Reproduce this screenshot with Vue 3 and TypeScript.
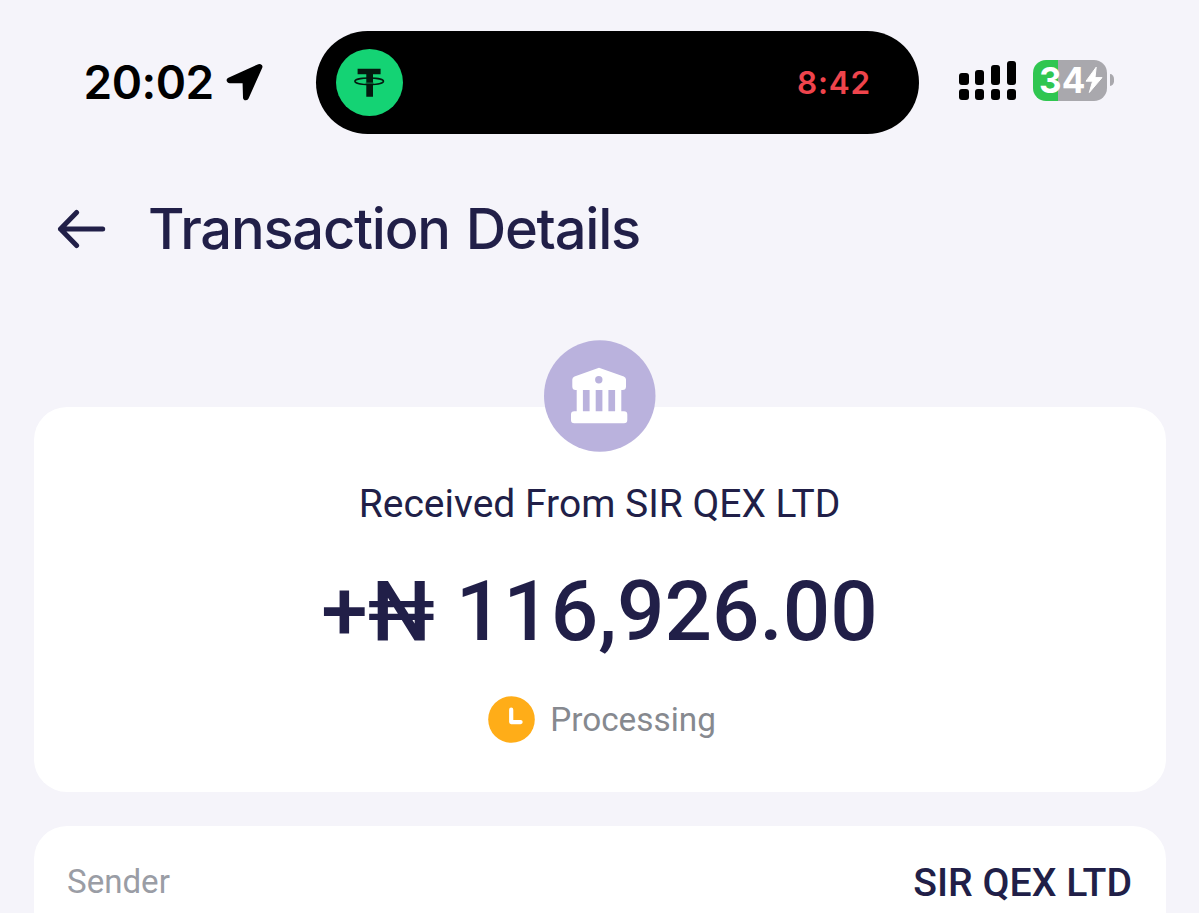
<script setup lang="ts">
interface Detail {
  label: string
  value: string
}

const signalBars: number[] = [11.7, 15, 19.7, 24]
const details: Detail[] = [{ label: 'Sender', value: 'SIR QEX LTD' }]
</script>

<template>
  <main class="screen">
    <header class="status">
      <span class="clock">20:02</span>
      <svg class="nav" width="37" height="38" viewBox="0 0 37 38">
        <path d="M33.500 3.800 3.600 17.400H19.400L19.900 34.300z" fill="#000" stroke="#000" stroke-width="5.800" stroke-linejoin="round" />
      </svg>

      <div class="island">
        <svg width="67" height="67" viewBox="0 0 67 67">
          <circle cx="33.500" cy="33.500" r="33.500" fill="#14d374" />
          <path d="M21.600 19.700H44.600V25.300H37V47.700H30.300V25.300H21.600z" fill="#04190f" />
          <path d="M29.500 34.200H37.800" stroke="#0c8a4c" stroke-width="1.200" />
          <ellipse cx="33.200" cy="32.300" rx="14.300" ry="3.300" fill="none" stroke="#04190f" stroke-width="1.500" />
        </svg>
        <span class="timer">8:42</span>
      </div>

      <div class="signal">
        <div v-for="h in signalBars" :key="h" class="signal-col">
          <i class="bar" :style="{ height: h + 'px' }" />
          <i class="dot" />
        </div>
      </div>

      <div class="battery">
        <span class="level">34</span>
        <svg class="bolt" width="18" height="28" viewBox="0 0 18 28">
          <path d="M11.200 1.200 1 15.200H7.600L4.300 26.500 17 11.600H10z" fill="#fff" stroke="#fff" stroke-width="1" stroke-linejoin="round" />
        </svg>
      </div>
      <i class="battery-cap" />
    </header>

    <div class="title-row">
      <svg width="50" height="40" viewBox="0 0 50 40">
        <path d="M45.700 20H3.500M19.600 3.500 3.500 20 19.600 36.500" fill="none" stroke="#211f48" stroke-width="5" stroke-linecap="round" stroke-linejoin="round" />
      </svg>
      <h1>Transaction Details</h1>
    </div>

    <section class="card summary">
      <svg class="bank" width="112" height="112" viewBox="0 0 112 112">
        <circle cx="55.750" cy="55.900" r="55.750" fill="#bab2dd" />
        <path
          fill="#fff"
          fill-rule="evenodd"
          d="M55 27.800 79.800 36.500Q82 37.300 82 39.500V46.500Q82 50 78.500 50H77.300V71.300H80Q83.300 71.300 83.300 74.500V80Q83.300 83.300 80 83.300H30.300Q27 83.300 27 80V74.500Q27 71.300 30.300 71.300H32.700V50H31.700Q28.300 50 28.300 46.500V39.500Q28.300 37.300 30.500 36.500zM58.500 39.700a3.700 3.700 0 1 0-7.400 0a3.700 3.700 0 1 0 7.400 0zM38.900 50V71.300H45.600V50zM51.700 50V71.300H58.400V50zM64.400 50V71.300H71.100V50z"
        />
      </svg>
      <p class="from">Received From SIR QEX LTD</p>
      <p class="amount">+₦ 116,926.00</p>
      <div class="state">
        <svg width="47" height="47" viewBox="0 0 47 47">
          <circle cx="23.500" cy="23.500" r="23.300" fill="#ffad18" />
          <path d="M23.200 13.700V26.100H32.600" fill="none" stroke="#fff" stroke-width="4.200" stroke-linecap="round" stroke-linejoin="round" />
        </svg>
        <span>Processing</span>
      </div>
    </section>

    <section class="card details">
      <div v-for="d in details" :key="d.label" class="detail">
        <span class="label">{{ d.label }}</span>
        <span class="value">{{ d.value }}</span>
      </div>
    </section>
  </main>
</template>

<style>
body {
  margin: 0;
}
</style>

<style scoped>
.screen {
  box-sizing: border-box;
  height: 913px;
  overflow: hidden;
  padding: 31px 33.5px 0;
  background: #f5f4fa;
  color: #211f48;
  font-family: Roboto, sans-serif;
}
svg {
  display: block;
  flex: none;
}
p,
h1 {
  margin: 0;
  white-space: nowrap;
}
.status {
  display: flex;
  align-items: center;
  height: 103px;
  padding-left: 50px;
}
.clock {
  width: 142.5px;
  margin-bottom: 1px;
  color: #000;
  font: 600 46px/56px Inter, sans-serif;
  letter-spacing: -0.5px;
}
.nav {
  margin-bottom: 1px;
}
.island {
  box-sizing: border-box;
  display: flex;
  flex: none;
  align-items: center;
  justify-content: space-between;
  width: 603px;
  height: 103px;
  margin-left: 53px;
  padding: 0 48px 0 19.5px;
  border-radius: 51.5px;
  background: #000;
}
.timer {
  padding-top: 1px;
  color: #ef444c;
  font: 600 31.5px/38px Inter, sans-serif;
  letter-spacing: 0.8px;
}
.signal {
  display: flex;
  align-items: flex-end;
  gap: 6.3px;
  margin: 0 0 4px 40px;
}
.signal-col {
  display: flex;
  flex-direction: column;
  gap: 4.6px;
}
.bar,
.dot {
  width: 9.6px;
  border-radius: 3px;
  background: #000;
}
.dot {
  height: 10.7px;
}
.battery {
  box-sizing: border-box;
  display: flex;
  flex: none;
  align-items: center;
  width: 74.5px;
  height: 40.5px;
  margin: 0 0 4.4px 16.5px;
  padding-left: 6.3px;
  border-radius: 13px;
  background: linear-gradient(to right, #30c650 25px, #a9a8ad 25px);
}
.level {
  width: 45.5px;
  color: #fff;
  font: 700 35px/40.5px Inter, sans-serif;
}
.battery-cap {
  width: 4.6px;
  height: 12px;
  margin: 0 0 4.4px 2.5px;
  border-radius: 0 5px 5px 0 / 0 6px 6px 0;
  background: #a9a8ad;
}
.title-row {
  display: flex;
  align-items: center;
  gap: 41px;
  height: 68px;
  margin-top: 60.7px;
  padding-left: 23.5px;
}
h1 {
  font: 500 56px/68px Inter, sans-serif;
  letter-spacing: -1.22px;
  word-spacing: 2.2px;
}
.card {
  box-sizing: border-box;
  border-radius: 33px;
  background: #fff;
}
.summary {
  display: flex;
  flex-direction: column;
  align-items: center;
  height: 385px;
  margin-top: 144.3px;
}
.bank {
  margin-top: -67px;
}
.from {
  margin-top: 29.5px;
  font-size: 39px;
  line-height: 46px;
}
.amount {
  margin-top: 34.7px;
  font-size: 83.6px;
  font-weight: 500;
  line-height: 98px;
}
.state {
  display: flex;
  align-items: center;
  gap: 15.7px;
  margin: 36.3px 0 0 4.4px;
  color: #86898f;
  font-size: 33.3px;
  line-height: 40px;
}
.state span {
  padding-bottom: 0.6px;
}
.details {
  height: 400px;
  margin-top: 34px;
  padding: 33.6px 33.5px;
}
.detail {
  display: flex;
  align-items: center;
  justify-content: space-between;
}
.label {
  padding-bottom: 1.4px;
  color: #9a9da5;
  font-size: 33.1px;
  line-height: 40px;
}
.value {
  font-size: 39.2px;
  font-weight: 500;
  line-height: 46px;
}
</style>
